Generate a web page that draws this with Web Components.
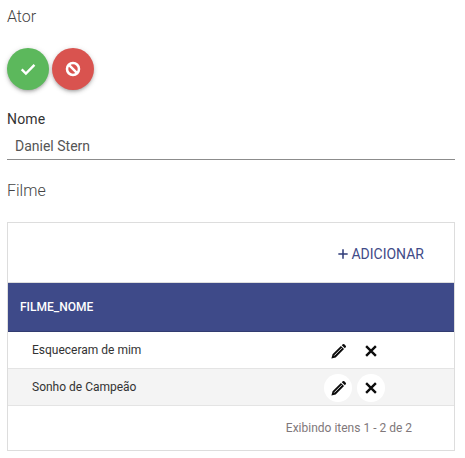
<!DOCTYPE html>
<html>
<head>
<meta charset="utf-8">
<style>
    html, body { margin: 0; padding: 0; background: #fff; }
    body { font-family: Roboto, "Liberation Sans", sans-serif; }
</style>
</head>
<body>
<ator-page></ator-page>
<script>
const ICONS = {
    check: '<path d="M3.6 12.6 9.2 18 20.6 6.6" fill="none" stroke="currentColor" stroke-width="3.2"/>',
    ban: '<circle cx="12" cy="12" r="8" fill="none" stroke="currentColor" stroke-width="3.4"/><path d="M6.5 6.5l11 11" stroke="currentColor" stroke-width="3.4"/>',
    pencil: '<path d="M2 22l1.6-6L15.4 4.2l4.4 4.4L8 20.4zM16.6 3l1.4-1.2a1.6 1.6 0 0 1 2.2 0l2 2a1.6 1.6 0 0 1 0 2.2L21 7.4z"/><path d="M6 17.8 16.6 7.2" stroke="#fff" stroke-width="1.2"/>',
    close: '<path d="M5.5 5.5l13 13M18.5 5.5l-13 13" stroke="currentColor" stroke-width="3.2" fill="none"/>',
    plus: '<path d="M12 4v16M4 12h16" stroke="currentColor" stroke-width="2.6" fill="none"/>'
};

class AppIcon extends HTMLElement {
    constructor() {
        super();
        this.attachShadow({ mode: 'open' });
    }

    connectedCallback() {
        const name = this.getAttribute('name');
        const size = this.getAttribute('size') || 24;
        this.shadowRoot.innerHTML = `
            <style>
                :host { display: inline-flex; line-height: 0; }
                svg { fill: currentColor; }
            </style>
            <svg width="${size}" height="${size}" viewBox="0 0 24 24">${ICONS[name]}</svg>
        `;
    }
}

class FabButton extends HTMLElement {
    constructor() {
        super();
        this.attachShadow({ mode: 'open' });
        this.shadowRoot.innerHTML = `
            <style>
                :host {
                    display: flex;
                    align-items: center;
                    justify-content: center;
                    width: 42px;
                    height: 42px;
                    border-radius: 50%;
                    color: #fff;
                    background: var(--bg);
                    box-shadow: 0 2px 3px -1px rgba(0,0,0,.2), 0 2px 4px 0 rgba(0,0,0,.14), 0 1px 6px 0 rgba(0,0,0,.1);
                }
            </style>
            <slot></slot>
        `;
    }
}

class TextField extends HTMLElement {
    constructor() {
        super();
        this.attachShadow({ mode: 'open' });
    }

    connectedCallback() {
        this.shadowRoot.innerHTML = `
            <style>
                :host { display: block; }
                .label { font-size: 14px; line-height: 16px; color: #333; letter-spacing: .2px; padding-top: 1px; }
                .value {
                    margin-top: 9px;
                    padding: 0 8px 3px;
                    height: 20px;
                    line-height: 20px;
                    font-size: 14px;
                    color: #555;
                    border-bottom: 1px solid #8c8c8c;
                }
            </style>
            <div class="label">${this.getAttribute('label')}</div>
            <div class="value">${this.getAttribute('value')}</div>
        `;
    }
}

class FilmRow extends HTMLElement {
    constructor() {
        super();
        this.attachShadow({ mode: 'open' });
    }

    connectedCallback() {
        const hover = this.hasAttribute('hover');
        this.shadowRoot.innerHTML = `
            <style>
                :host {
                    display: flex;
                    align-items: center;
                    height: 36px;
                    padding-left: 24px;
                    border-bottom: 1px solid #e4e4e4;
                    background: ${hover ? '#f4f4f4' : '#fff'};
                    font-size: 12px;
                    color: #333;
                }
                .name { flex: 1; }
                .actions { display: flex; gap: 5px; margin: 2px 69px 0 0; color: #0c0c0c; }
                .act {
                    width: 28px;
                    height: 28px;
                    border-radius: 50%;
                    display: flex;
                    align-items: center;
                    justify-content: center;
                    background: ${hover ? '#fff' : 'transparent'};
                }
            </style>
            <div class="name"><slot></slot></div>
            <div class="actions">
                <div class="act"><app-icon name="pencil" size="17"></app-icon></div>
                <div class="act"><app-icon name="close" size="18"></app-icon></div>
            </div>
        `;
    }
}

class FilmTable extends HTMLElement {
    constructor() {
        super();
        this.attachShadow({ mode: 'open' });
        this.shadowRoot.innerHTML = `
            <style>
                :host { display: block; border: 1px solid #ddd; background: #fff; }
                .toolbar {
                    display: flex;
                    justify-content: flex-end;
                    align-items: center;
                    height: 57px;
                    padding: 2px 30px 0 0;
                    border-bottom: 1px solid #ddd;
                    font-size: 14px;
                    color: #3f4b88;
                }
                .toolbar app-icon { color: #2f3b78; margin-right: 1px; }
                .head {
                    display: flex;
                    align-items: center;
                    height: 48px;
                    padding-left: 12px;
                    background: #3e4a89;
                    border-bottom: 1px solid #323c70;
                    color: #fff;
                    font-size: 12px;
                    font-weight: 500;
                }
                .foot {
                    display: flex;
                    justify-content: flex-end;
                    align-items: center;
                    height: 44px;
                    padding-right: 42px;
                    font-size: 12px;
                    color: #80777a;
                }
            </style>
            <div class="toolbar"><app-icon name="plus" size="14"></app-icon>ADICIONAR</div>
            <div class="head">FILME_NOME</div>
            <slot></slot>
            <div class="foot">Exibindo itens 1 - 2 de 2</div>
        `;
    }
}

class AtorPage extends HTMLElement {
    constructor() {
        super();
        this.attachShadow({ mode: 'open' });
        this.shadowRoot.innerHTML = `
            <style>
                :host { display: block; padding: 7px 10px 0 7px; }
                h2 { margin: 0; font-size: 16px; line-height: 20px; font-weight: 300; color: #444; }
                .buttons { display: flex; gap: 3px; margin: 21px 0 20px; }
                text-field { margin-bottom: 21px; }
                film-table { margin-top: 21px; }
            </style>
            <h2>Ator</h2>
            <div class="buttons">
                <fab-button style="--bg:#5cb85c"><app-icon name="check" size="18"></app-icon></fab-button>
                <fab-button style="--bg:#d9534f"><app-icon name="ban" size="18"></app-icon></fab-button>
            </div>
            <text-field label="Nome" value="Daniel Stern"></text-field>
            <h2>Filme</h2>
            <film-table>
                <film-row>Esqueceram de mim</film-row>
                <film-row hover>Sonho de Campeão</film-row>
            </film-table>
        `;
    }
}

customElements.define('app-icon', AppIcon);
customElements.define('fab-button', FabButton);
customElements.define('text-field', TextField);
customElements.define('film-row', FilmRow);
customElements.define('film-table', FilmTable);
customElements.define('ator-page', AtorPage);
</script>
</body>
</html>
